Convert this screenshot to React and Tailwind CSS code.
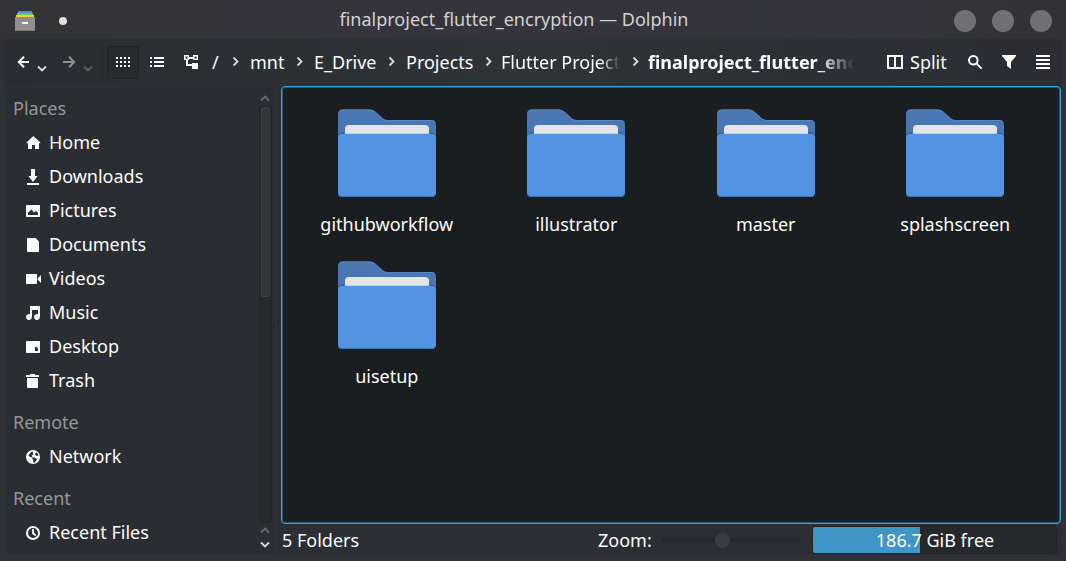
import React from "react";

const PLACES = [
  {
    title: "Places",
    items: [
      ["Home", <path d="M9.3 3 16.3 9.6 V10.3 H15 V16 H11 V12 H8 V16 H4 V10.3 H2.6 V9.6Z" />],
      ["Downloads", <path d="M7 2H11V9H13.7L9 15 4.3 9H7ZM3 16H15V18H3Z" />],
      ["Pictures", <path fillRule="evenodd" d="M2.6 4H15.4L16 4.6V15.4L15.4 16H2.6L2 15.4V4.6ZM4 14H14V11.8L11.8 10 10 11.6 7.3 8.4 4 12Z" />],
      ["Documents", <path d="M3.6 3H11.6L15 6.5V16.4L14.4 17H3.6L3 16.4V3.6Z" />],
      ["Videos", <path d="M2.6 5H12.4L13 5.6V14.4L12.4 15H2.6L2 14.4V5.6ZM17 6V14L13.6 10.6V9.4Z" />],
      ["Music", <path d="M6.5 3H15.4L16 3.6V14A3 3 0 1 1 14 11.2V7H8V14A3 3 0 1 1 6 11.2V3.6Z" />],
      ["Desktop", <path fillRule="evenodd" d="M2.6 4H15.4L16 4.6V15.4L15.4 16H2.6L2 15.4V4.6ZM11 10V14H14V11.5L12.5 10Z" />],
      ["Trash", <path d="M6 4V3.4L6.6 3H10.4L11 3.4V4H15V6H2V4ZM3 7H14V16.4L13.4 17H3.6L3 16.4Z" />],
    ],
  },
  {
    title: "Remote",
    items: [
      [
        "Network",
        <>
          <circle cx="9" cy="10" r="7" />
          <path fill="#2a2d31" d="M4.3 8.4 7.2 5 9.5 4.6 8.6 6.2 9.6 7.2 7.6 8.6 8.4 10 6.6 10.3ZM7.8 10.6 10.6 10.4 13 12 11 15.4 9.4 15.8 9.3 13.4ZM12 5.3 13.4 6.2 14.6 8.5 12.4 8.9 11 7.4Z" />
        </>,
      ],
    ],
  },
  {
    title: "Recent",
    items: [
      [
        "Recent Files",
        <>
          <circle cx="9" cy="10" r="6" fill="none" stroke="#fcfcfc" strokeWidth="2" />
          <path d="M8 6H10V9.6L12.2 11.8 11 13.2 8 10.5Z" />
        </>,
      ],
    ],
  },
];

const FOLDERS = ["githubworkflow", "illustrator", "master", "splashscreen", "uisetup"];

function Chevron({ dir, className }) {
  const d = {
    right: "M1.5 1.5 5.5 5.5 1.5 9.5",
    down: "M1 1.5 5 5.5 9 1.5",
    up: "M1 5.5 5 1.5 9 5.5",
  }[dir];
  return (
    <svg
      className={className}
      width={dir === "right" ? 7 : 10}
      height={dir === "right" ? 11 : 7}
      fill="none"
      stroke="currentColor"
      strokeWidth="1.8"
    >
      <path d={d} />
    </svg>
  );
}

function Crumb({ label, className, chevron = true }) {
  return (
    <>
      <div className={"shrink-0 overflow-hidden whitespace-nowrap " + className}>{label}</div>
      {chevron && (
        <div className="w-[18px] shrink-0 pb-px text-[#dadbdb]">
          <Chevron dir="right" />
        </div>
      )}
    </>
  );
}

function Arrow({ flip, className }) {
  return (
    <svg width="13" height="12" className={className} fill="none" stroke="currentColor" strokeWidth="2">
      <path d={flip ? "M0 6H11M6 .8 11.2 6 6 11.2" : "M12 6H2M7 .8 1.8 6 7 11.2"} />
    </svg>
  );
}

function TitleBar() {
  return (
    <header className="flex h-[39px] shrink-0 items-center bg-linear-to-r from-[#333336] via-[#35343d] to-[#323236]">
      <svg width="20" height="22" className="mt-px ml-[15px]">
        <path d="M3 2.5 3.5 2H16.5L17 2.5V4H3Z" fill="#4a90e0" />
        <path d="M2 4H18V6H2Z" fill="#76c84a" />
        <path d="M1 6H19V8H1Z" fill="#fbc940" />
        <rect y="8" width="20" height="14" rx="0.8" fill="#909090" />
        <path d="M.5 21.5H19.5" stroke="#7b7b7c" />
        <rect x="7" y="13" width="6" height="2" fill="#fafafa" />
      </svg>
      <div className="mt-[3px] ml-6 size-2 rounded-full bg-[#dededc]" />
      <h1 className="flex-1 pb-[2px] pl-[7px] text-center text-[#d2d2d1]">
        finalproject_flutter_encryption — Dolphin
      </h1>
      <div className="mt-[3px] mr-[14px] flex gap-4">
        <i className="size-[22px] rounded-full bg-[#717173]" />
        <i className="size-[22px] rounded-full bg-[#717173]" />
        <i className="size-[22px] rounded-full bg-[#717173]" />
      </div>
    </header>
  );
}

function Toolbar() {
  return (
    <nav className="flex h-[47px] shrink-0 items-center bg-linear-to-r from-[#2a2d31] via-[#2e3336] to-[#2b2d32] pb-px">
      <Arrow className="ml-[13px] shrink-0" />
      <Chevron dir="down" className="mt-[13px] ml-[7px] shrink-0 text-[#d8d9d9]" />
      <Arrow flip className="ml-4 shrink-0 text-[#8e9092]" />
      <Chevron dir="down" className="mt-[13px] ml-[7px] shrink-0 text-[#5e6163]" />
      <div className="ml-[9px] h-9 w-px shrink-0 bg-[#25282b]" />
      <div className="mt-px ml-1 flex h-[33px] w-8 shrink-0 items-center justify-center rounded-[3px] border border-[#212427] bg-[#282b2e] pb-px">
        <svg width="14" height="10" fill="#fcfcfc" shapeRendering="crispEdges">
          {[0, 4, 8].map((y) => [0, 4, 8, 12].map((x) => <rect key={x + "-" + y} x={x} y={y} width="2" height="2" />))}
        </svg>
      </div>
      <svg width="14" height="10" className="ml-[11px] shrink-0" fill="#fcfcfc" shapeRendering="crispEdges">
        <path d="M0 0H2V2H0ZM4 0H14V2H4ZM0 4H2V6H0ZM4 4H14V6H4ZM0 8H2V10H0ZM4 8H14V10H4Z" />
      </svg>
      <svg width="14" height="14" className="ml-5 shrink-0" fill="#fcfcfc">
        <path fillRule="evenodd" d="M0 0H5V2H9V0H14V5H9V4H5V5H4V9H8V8H14V14H8V11H2V5H0ZM1.5 1.5V3.5H3.5V1.5ZM10.5 1.5V3.5H12.5V1.5Z" />
      </svg>
      <Crumb label="/" className="ml-[14px] w-5" />
      <Crumb label="mnt" className="w-[46px]" />
      <Crumb label="E_Drive" className="w-[74px]" />
      <Crumb label="Projects" className="w-[79px]" />
      <Crumb
        label="Flutter Projects"
        className="-ml-[2px] w-[131px] [mask-image:linear-gradient(to_right,black_99px,transparent_120px)]"
      />
      <Crumb
        label="finalproject_flutter_encryption"
        chevron={false}
        className="-ml-[2px] w-[206px] font-bold [mask-image:linear-gradient(to_right,black_170px,transparent_206px)]"
      />
      <div className="ml-auto flex shrink-0 items-center pr-3">
        <svg width="16" height="14" fill="none" stroke="#fcfcfc" strokeWidth="2" shapeRendering="crispEdges">
          <path d="M1 1H15V13H1ZM8 1V13" />
        </svg>
        <span className="w-[65px] pl-[7px]">Split</span>
        <svg width="15" height="14" fill="none" stroke="#fcfcfc" strokeWidth="2">
          <circle cx="5.3" cy="5.3" r="4.3" />
          <path d="M8.4 8.4 13.6 13.6" />
        </svg>
        <svg width="14" height="14" className="ml-[19px]" fill="#fcfcfc">
          <path d="M0 0H14V1L9 7V14L5 11V7L0 1Z" />
        </svg>
        <svg width="14" height="14" className="ml-5" fill="#fcfcfc" shapeRendering="crispEdges">
          <path d="M0 0H14V2H0ZM0 4H14V6H0ZM0 8H14V10H0ZM0 12H14V14H0Z" />
        </svg>
      </div>
    </nav>
  );
}

function Sidebar() {
  return (
    <aside className="ml-px flex w-[271px] shrink-0 rounded-[4px] border border-[#303337] bg-[#2a2d31]">
      <div className="flex flex-1 flex-col gap-2 pt-1 pl-[7px]">
        {PLACES.map((group) => (
          <section key={group.title}>
            <h2 className="h-[34px] leading-[34px] text-[#96989a]">{group.title}</h2>
            {group.items.map(([name, icon]) => (
              <div key={name} className="flex h-[34px] items-center gap-[7px] pl-[11px]">
                <svg width="18" height="18" fill="#fcfcfc">
                  {icon}
                </svg>
                <span>{name}</span>
              </div>
            ))}
          </section>
        ))}
      </div>
      <div className="mr-[3px] flex w-[13px] flex-col items-center pt-2 pb-[6px]">
        <Chevron dir="up" className="mr-px text-[#676a6c]" />
        <div className="mt-1 w-[13px] flex-1 rounded-[3px] border border-[#222528] bg-[#272a2d]">
          <div className="mx-auto h-[190px] w-[9px] rounded-[2px] border border-[#3c4145] bg-[#323639]" />
        </div>
        <Chevron dir="up" className="mt-1 mr-px text-[#676a6c]" />
        <Chevron dir="down" className="mt-[7px] mr-px text-[#d8d9d9]" />
      </div>
    </aside>
  );
}

function FolderIcon() {
  return (
    <svg width="98" height="89">
      <path d="M0 5Q0 .5 4.5 .5H32Q35 .5 37.5 2.7L45 9.5Q47 11 49.5 11H93.5Q98 11 98 15.5V40H0Z" fill="#4a77b3" />
      <path d="M1 3.5Q2 1 5 1H32Q35 1 37.3 3.2L44.6 9.9Q46.7 11.5 49.3 11.5H93.5Q96 11.5 97 13.5" fill="none" stroke="#5c86bf" />
      <path d="M0 28Q0 23.3 4.5 23.3H93.5Q98 23.3 98 28V35H0Z" fill="#3c659b" />
      <path d="M7 25V20Q7 16 11 16H87Q91 16 91 20V25Z" fill="#e4e4e4" />
      <path d="M0 29.5Q0 25 4.5 25H93.5Q98 25 98 29.5V83.5Q98 88 93.5 88H4.5Q0 88 0 83.5Z" fill="#5294e2" />
      <path d="M1 86.2Q2.3 87.5 4.5 87.5H93.5Q95.7 87.5 97 86.2" fill="none" stroke="#3f73b2" />
      <path d="M7 24.5H91" stroke="#bdd0e8" />
    </svg>
  );
}

function FolderView() {
  return (
    <main className="flex-1 rounded-[4px] border border-[#3ba3d8] bg-[#1b1e20] shadow-[inset_0_0_0_1px_#285a76]">
      <div className="grid auto-rows-[152px] grid-cols-4 pt-[22px] pr-[10px] pl-[10px]">
        {FOLDERS.map((name) => (
          <figure key={name} className="flex flex-col items-center">
            <FolderIcon />
            <figcaption className="mt-[14px]">{name}</figcaption>
          </figure>
        ))}
      </div>
    </main>
  );
}

function StatusBar() {
  return (
    <footer className="flex h-[31px] shrink-0 items-center pt-px">
      <span className="pl-px">5 Folders</span>
      <span className="ml-auto w-[62px] whitespace-nowrap">Zoom:</span>
      <div className="mr-[12px] ml-[2px] flex h-[5px] w-[138px] items-center rounded-full bg-[#26292c]">
        <div className="ml-[53px] size-[15px] shrink-0 rounded-full bg-[#3a3e42]" />
      </div>
      <div className="mr-1 flex h-[28px] w-[245px] items-center justify-center rounded-[3px] border border-[#222528] bg-[linear-gradient(to_right,#3f95c5_107px,#26292c_107px)] pl-px">
        186.7 GiB free
      </div>
    </footer>
  );
}

export default function App() {
  return (
    <div className="flex h-[561px] w-[1066px] flex-col overflow-hidden bg-[#323137] font-['Noto_Sans',sans-serif] text-[18px] leading-6 text-[#fcfcfc]">
      <TitleBar />
      <div className="mx-1 mb-[6px] flex min-h-0 flex-1 flex-col bg-[#2b2e32]">
        <Toolbar />
        <div className="flex min-h-0 flex-1">
          <Sidebar />
          <div className="flex w-[5px] shrink-0 flex-col items-center gap-[2px] pt-[231px]">
            <i className="size-px bg-[#17191b]" />
            <i className="size-px bg-[#17191b]" />
            <i className="size-px bg-[#17191b]" />
          </div>
          <div className="mr-px flex min-w-0 flex-1 flex-col">
            <FolderView />
            <StatusBar />
          </div>
        </div>
      </div>
    </div>
  );
}
